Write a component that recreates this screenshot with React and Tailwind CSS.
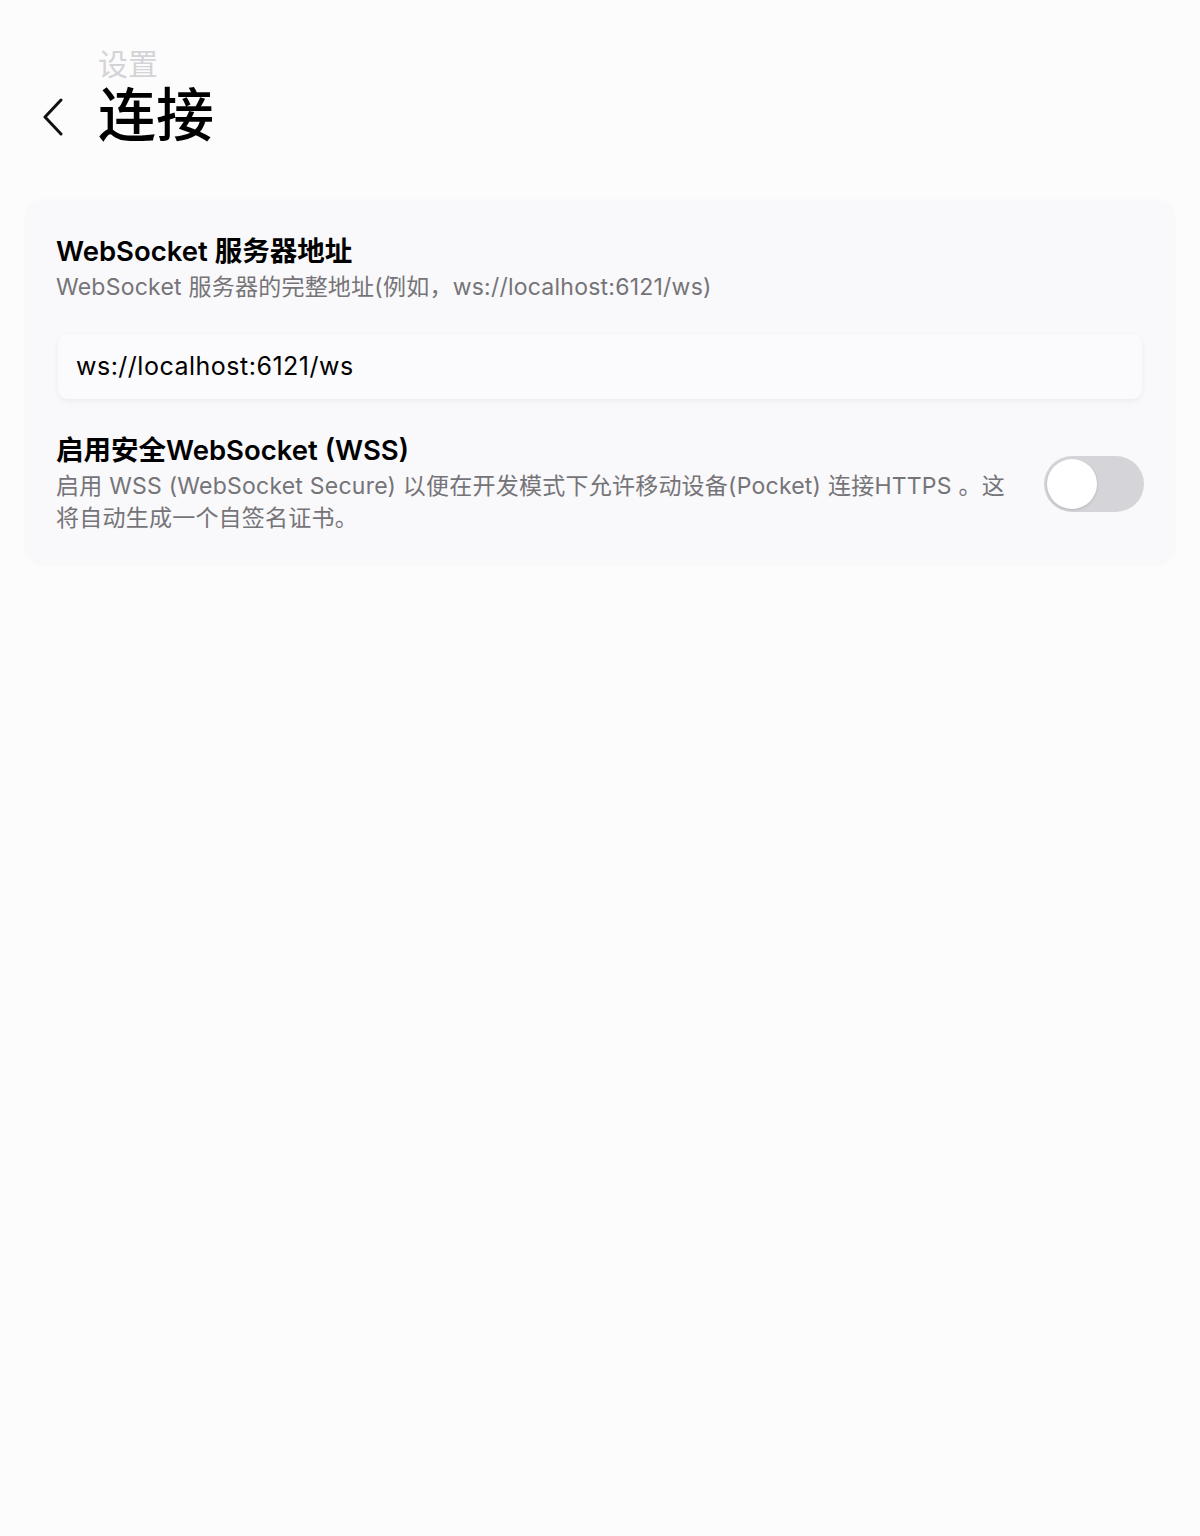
export default function App() {
  const font = { fontFamily: 'Inter, "Noto Sans CJK SC", sans-serif' };
  return (
    <div className="min-h-[1536px] w-[1200px] bg-[#fdfcfd] text-black" style={font}>
      <div className="flex items-end pl-[40px] pt-[46px]">
        <div className="mb-[10px] flex h-[40px] w-[58px] items-center">
          <svg width="24" height="40" viewBox="0 0 24 40" fill="none">
            <path d="M21 2 L5 19 L21 36" stroke="#111" strokeWidth="3" strokeLinecap="round" strokeLinejoin="round" />
          </svg>
        </div>
        <div className="flex flex-col">
          <div className="text-[30px] leading-[36px] text-[#d4d3d7]">设置</div>
          <div className="text-[58px] leading-[66px] font-medium">连接</div>
        </div>
      </div>

      <div className="mx-[26px] mt-[52px] rounded-[18px] bg-[#f9f8fa] px-[30px] pt-[34px] pb-[29px] shadow-[0_1px_6px_rgba(0,0,0,0.03)]">
        <div className="text-[27.5px] font-semibold leading-[34px]">WebSocket 服务器地址</div>
        <div className="mt-[4px] text-[23px] tracking-[0.01em] leading-[30px] text-[#757478]">
          WebSocket 服务器的完整地址(例如，ws://localhost:6121/ws)
        </div>
        <div className="mt-[32px] mx-[2px] flex h-[65px] items-center rounded-[10px] bg-[#fbfafc] px-[18px] text-[25px] tracking-[0.02em] shadow-[0_2px_6px_rgba(0,0,0,0.06)]">
          ws://localhost:6121/ws
        </div>

        <div className="mt-[34px] flex items-center justify-between gap-[30px]">
          <div className="flex-1">
            <div className="text-[27.5px] font-semibold leading-[34px]">启用安全WebSocket (WSS)</div>
            <div className="mt-[3px] text-[23px] tracking-[0.01em] leading-[32px] text-[#757478]">
              启用 WSS (WebSocket Secure) 以便在开发模式下允许移动设备(Pocket) 连接HTTPS 。这将自动生成一个自签名证书。
            </div>
          </div>
          <div className="flex h-[56px] w-[100px] shrink-0 items-center rounded-full bg-[#d5d4d8] p-[4px]">
            <div className="h-[50px] w-[50px] rounded-full bg-white shadow-[0_1px_3px_rgba(0,0,0,0.15)] -ml-[1px]" />
          </div>
        </div>
      </div>
    </div>
  );
}
